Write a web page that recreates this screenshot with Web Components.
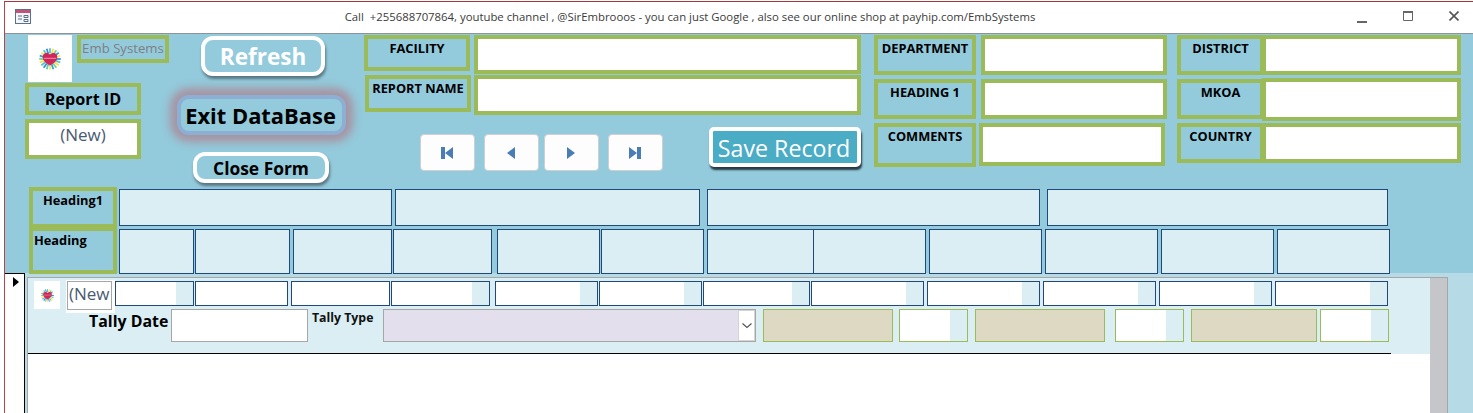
<!DOCTYPE html>
<html lang="en">
<head>
<meta charset="utf-8">
<title>Tally form</title>
<style>
html,body{margin:0;padding:0;background:#fff;overflow:hidden}
body{width:1473px;height:413px;font-family:"Open Sans","Noto Sans",sans-serif}
</style>
</head>
<body>
<access-window>
  <title-bar slot="title">Call &nbsp;+255688707864, youtube channel , @SirEmbrooos - you can just Google , also see our online shop at payhip.com/EmbSystems</title-bar>
  <form-header slot="header"></form-header>
  <form-detail slot="detail"></form-detail>
</access-window>

<script>
const GREEN='#9BBB59', SKY='#93CBDC', PALE='#DBEEF4', NAVY='#1F497D';
const def=(name,cls)=>customElements.define(name,cls);
class Base extends HTMLElement{
  constructor(){super();this.attachShadow({mode:'open'});}
  render(html){this.shadowRoot.innerHTML=html;}
}

def('access-window',class extends Base{
  constructor(){super();this.render(`<style>
    :host{display:block;box-sizing:border-box;width:1469px;height:412px;margin:1px 0 0 4px;border-top:1px solid #A5373B;border-left:1px solid #B8444A;overflow:hidden}
  </style><slot name="title"></slot><slot name="header"></slot><slot name="detail"></slot>`);}
});

def('title-bar',class extends Base{
  constructor(){super();this.render(`<style>
    :host{display:flex;align-items:center;box-sizing:border-box;height:32px;background:#fff;border-bottom:1px solid #8C939C;position:relative;font:11.35px "Open Sans",sans-serif;color:#3b3b3b}
    .ico{margin-left:10px;width:17px;height:16px;flex:none;margin-top:-1px}
    .txt{margin-left:305px;width:706px;text-align:center;white-space:nowrap;margin-top:-3px}
    .min{margin-left:314px}.max{margin-left:36px}.cls{margin-left:36px}
    svg{display:block;flex:none}
  </style>
  <svg class="ico" viewBox="0 0 17 16"><rect x=".5" y=".5" width="15" height="14" fill="#F4F6FA" stroke="#5B6F8E"/><rect x="1" y="1" width="14" height="3" fill="#C4517A"/><path d="M3 7h4M3 10h4M9 6.500h4v2h-4zM9 10.500h4v2h-4z" stroke="#5B6F8E" fill="none"/></svg>
  <span class="txt"><slot></slot></span>
  <svg class="min" width="10" height="10" viewBox="0 0 10 10" style="margin-top:5px"><rect y="6" width="10" height="2" fill="#666"/></svg>
  <svg class="max" width="10" height="10" viewBox="0 0 10 10" style="margin-top:-3px"><path d="M.5.500h9v9h-9z" fill="none" stroke="#666"/><rect width="10" height="2" fill="#666"/></svg>
  <svg class="cls" width="10" height="10" viewBox="0 0 10 10" style="margin-top:-3px"><path d="M.5.500l9 9M9.500.500l-9 9" stroke="#555" stroke-width="1.600"/></svg>`);}
});

def('green-box',class extends Base{
  constructor(){super();this.render(`<style>
    :host{display:block;box-sizing:border-box;flex:none;border:4px solid ${GREEN};background:${SKY};color:#000;font:700 12.8px/16px "Open Sans",sans-serif;text-align:center;white-space:nowrap;overflow:hidden;position:relative;--pt:1px}
    :host([white]){background:#fff}
    :host([big]){font-size:17px;font-weight:400;line-height:22px;color:#4a5a72}
    :host([head]){font-size:16.2px;line-height:20px;padding-top:1px}
    :host([muted]){font-size:13.2px;font-weight:400;color:#808080;line-height:16px}
    :host([left]){text-align:left;padding-left:1px}
    div{padding-top:var(--pt)}
  </style><div><slot></slot></div>`);}
});

def('round-btn',class extends Base{
  constructor(){super();this.render(`<style>
    :host{display:flex;align-items:center;justify-content:center;box-sizing:border-box;flex:none;border:4px solid #fff;border-radius:12px;background:${SKY};box-shadow:1px 3px 3px rgba(40,50,60,.55);font:700 22.5px "Open Sans",sans-serif;white-space:nowrap;color:#fff}
    :host([dark]){color:#000;font-size:17.4px;padding-top:1px}
    :host([exit]){color:#000;font-size:21.9px;border:4px solid #8EAFD4;padding:1px 2px 0 0;box-shadow:0 0 8px 7px rgba(168,141,155,.9)}
    :host([save]){background:#4BACC6;border-radius:5px;font-weight:400;font-size:23.2px;padding:1px 2px 0 0;box-shadow:1px 3px 2px rgba(20,30,40,.85)}
  </style><slot></slot>`);}
});

def('nav-btn',class extends Base{
  constructor(){super();
    const k=this.getAttribute('kind');
    const [w,p]={first:[12,'M0 0h4v12h-4zM12 0v12l-8-6z'],prev:[8,'M8 0v12l-8-6z'],next:[8,'M0 0v12l8-6z'],last:[12,'M8 0h4v12h-4zM0 0v12l8-6z']}[k];
    this.render(`<style>
    :host{display:flex;align-items:center;justify-content:center;box-sizing:border-box;flex:none;width:55px;height:37px;background:#FDFDFD;border:1px solid #CFCFD2;border-radius:4px}
    svg{display:block;margin-right:1px}
  </style><svg width="${w}" height="12" viewBox="0 0 ${w} 12"><path d="${p}" fill="#4A7DB5"/></svg>`);}
});

def('heart-logo',class extends Base{
  constructor(){super();
    const s=+this.getAttribute('size');
    const cols=['#3C8AD0','#4CC4D4','#F4E04A','#7BD08F','#2F9FDC','#F4E660','#5CC6BA'];
    let rays='';
    for(let i=0;i<20;i++){const a=i/20*Math.PI*2,c=Math.cos(a),q=Math.sin(a);
      rays+=`<line x1="${(50+c*25).toFixed(1)}" y1="${(50+q*25).toFixed(1)}" x2="${(50+c*49).toFixed(1)}" y2="${(50+q*49).toFixed(1)}" stroke="${cols[i%7]}" stroke-width="8"/>`;}
    this.render(`<style>
    :host{display:flex;align-items:center;justify-content:center;flex:none;background:#fff}
    svg{display:block}
  </style><svg width="${s}" height="${s}" viewBox="0 0 100 100">${rays}<path d="M50 80C36 72 17 60 17 40c0-10 8-17 17-17 7 0 12 3 16 7 4-4 9-7 16-7 9 0 17 7 17 17 0 20-19 32-33 40z" fill="#D0245A"/><path d="M22 47h56" stroke="#EE8AA0" stroke-width="5"/></svg>`);}
});

/* A row of table-like cells described as x-ranges: each gap is a flex margin */
def('cell-row',class extends Base{
  constructor(){super();
    const start=+this.getAttribute('start');
    const h=this.getAttribute('h');
    const line=this.getAttribute('line')||NAVY;
    let x=start,html='';
    for(const c of this.getAttribute('cells').split(',')){
      const [rng,fill]=c.split(':');
      const [a,b]=rng.split('-').map(Number);
      const f=fill?(+fill-a-1)+'px':'0';
      const bg=fill==='w'?'#fff':fill?`linear-gradient(90deg,#fff ${f},${PALE} ${f})`:PALE;
      html+=`<div style="margin-left:${a-x}px;width:${b-a}px;background:${bg}"></div>`;
      x=b;
    }
    this.render(`<style>
    :host{display:flex;flex:none}
    div{box-sizing:border-box;flex:none;height:${h}px;border:1px solid ${line}}
    </style>${html}`);}
});

def('form-header',class extends Base{
  constructor(){super();this.render(`<style>
    :host{display:block;height:239px;background:${SKY}}
    .top{display:flex;height:153px}
    .col{display:flex;flex-direction:column;flex:none}
    .row{display:flex;align-items:flex-start;flex:none}
    .a{margin-left:20px;width:144px}
    .b{margin-left:8px;width:169px}
    .c{margin-left:18px;width:497px}
    .d{margin-left:13px;width:293px}
    .e{margin-left:10px;width:284px}
    .grid{display:flex;height:86px}
    .labels{margin-left:24px;width:88px;display:flex;flex-direction:column}
    .cells{margin-left:2px;display:flex;flex-direction:column;padding-top:2px;gap:3px}
  </style>
  <div class="top">
    <div class="col a">
      <div class="row" style="height:47px;margin-top:1px">
        <heart-logo size="22" style="margin-left:3px;width:44px;height:47px"></heart-logo>
        <green-box muted style="margin-left:5px;width:92px;height:28px">Emb Systems</green-box>
      </div>
      <green-box head style="margin-top:1px;width:116px;height:32px">Report ID</green-box>
      <green-box white big style="margin-top:4px;width:116px;height:40px">(New)</green-box>
    </div>
    <div class="col b">
      <round-btn style="margin:2px 0 0 24px;width:124px;height:40px">Refresh</round-btn>
      <round-btn exit style="margin-top:19px;width:169px;height:40px">Exit DataBase</round-btn>
      <round-btn dark style="margin:17px 0 0 16px;width:136px;height:31px">Close Form</round-btn>
    </div>
    <div class="col c">
      <div class="row" style="margin-top:1px;height:40px">
        <green-box style="width:106px;height:36px">FACILITY</green-box>
        <green-box white style="margin-left:4px;width:387px;height:39px"></green-box>
      </div>
      <div class="row" style="height:40px">
        <green-box style="margin-left:1px;width:106px;height:37px">REPORT NAME</green-box>
        <green-box white style="margin-left:3px;width:387px;height:40px"></green-box>
      </div>
      <div class="row" style="margin-top:12px">
        <nav-btn kind="first" style="margin:7px 0 0 56px"></nav-btn>
        <nav-btn kind="prev" style="margin:7px 0 0 9px"></nav-btn>
        <nav-btn kind="next" style="margin:7px 0 0 5px"></nav-btn>
        <nav-btn kind="last" style="margin:7px 0 0 9px"></nav-btn>
        <round-btn save style="margin-left:46px;width:152px;height:40px">Save Record</round-btn>
      </div>
    </div>
    <div class="col d">
      <div class="row" style="margin-top:1px;height:44px">
        <green-box style="width:102px;height:40px">DEPARTMENT</green-box>
        <green-box white style="margin-left:5px;width:186px;height:40px"></green-box>
      </div>
      <div class="row" style="height:44px">
        <green-box style="width:102px;height:40px">HEADING 1</green-box>
        <green-box white style="margin-left:5px;width:186px;height:40px"></green-box>
      </div>
      <div class="row">
        <green-box style="width:102px;height:44px">COMMENTS</green-box>
        <green-box white style="margin-left:3px;width:186px;height:43px"></green-box>
      </div>
    </div>
    <div class="col e">
      <div class="row" style="margin-top:1px;height:44px">
        <green-box style="width:87px;height:40px">DISTRICT</green-box>
        <green-box white style="margin-left:-2px;width:199px;height:40px"></green-box>
      </div>
      <div class="row" style="height:44px">
        <green-box style="width:87px;height:40px">MKOA</green-box>
        <green-box white style="margin:-1px 0 0 -2px;width:199px;height:43px"></green-box>
      </div>
      <div class="row">
        <green-box style="width:87px;height:40px">COUNTRY</green-box>
        <green-box white style="margin-left:-2px;width:199px;height:40px"></green-box>
      </div>
    </div>
  </div>
  <div class="grid">
    <div class="labels">
      <green-box style="height:41px">Heading1</green-box>
      <green-box left style="height:47px;margin-top:-1px">Heading</green-box>
    </div>
    <div class="cells">
      <cell-row start="119" h="37" cells="119-392,395-700,707-1040,1047-1388"></cell-row>
      <cell-row start="119" h="45" cells="119-194,195-290,293-392,393-492,497-600,601-704,707-814,813-926,929-1042,1045-1158,1161-1274,1277-1390"></cell-row>
    </div>
  </div>`);}
});

def('form-detail',class extends Base{
  constructor(){super();this.render(`<style>
    :host{display:flex;height:140px;background:#B6DBE7;font-family:"Open Sans",sans-serif}
    .sel{box-sizing:border-box;flex:none;width:20px;background:#fff;border-top:1px solid #000;border-right:1px solid #000;padding:3px 0 0 8px}
    .sel svg{display:block}
    .panel{box-sizing:border-box;flex:none;display:flex;margin:4px 0 0 2px;width:1421px;border:1px solid #A6A6A6;border-width:1px 1px 0 1px;background:#fff}
    .body{flex:none;width:1402px}
    .sec{height:76px;background:${PALE};display:flex;flex-direction:column}
    .sb{flex:1;background:#C4C6CA}
    .r1{display:flex;align-items:flex-start;height:28px;margin-top:3px}
    .new{box-sizing:border-box;flex:none;margin:-1px 0 0 6px;width:49px;height:33px;background:#fff;padding:1px 3px 3px 1px}
    .new div{box-sizing:border-box;height:29px;border:1px solid #A6A6A6;font-size:17px;line-height:24px;padding-left:1px;color:#4a5a72;overflow:hidden;white-space:nowrap}
    .r2{display:flex;align-items:flex-start;height:33px}
    .td{flex:none;margin-left:61px;width:79px;font-size:15.9px;font-weight:700;line-height:24px;white-space:nowrap}
    .tt{flex:none;margin-left:4px;width:62px;font-size:12.3px;font-weight:700;line-height:18px;white-space:nowrap;color:#111}
    .bx{box-sizing:border-box;flex:none;height:33px;border:1px solid ${GREEN}}
    .gray{border-color:#A6A6A6;background:#fff}
    .combo{position:relative;background:#E4DFEC;margin-left:9px;width:373px}
    .dd{position:absolute;right:0;top:0;width:17px;height:31px;box-sizing:border-box;background:#fff;border:1px solid #D5D5D5;display:flex;align-items:center;justify-content:center}
    .ol{background:#DDD9C3}
    .hf{background:linear-gradient(90deg,#fff 50px,${PALE} 50px)}
    .line{margin-top:11px;width:1363px;height:1px;background:#000}
  </style>
  <div class="sel"><svg width="6" height="10" viewBox="0 0 6 10"><path d="M0 0l6 5-6 5z" fill="#000"/></svg></div>
  <div class="panel">
    <div class="body">
      <div class="sec">
        <div class="r1">
          <heart-logo size="13" style="margin-left:6px;width:26px;height:28px"></heart-logo>
          <div class="new"><div>(New</div></div>
          <cell-row start="115" h="25" cells="115-194:176,195-288:w,291-390:w,391-490:472,495-598:580,599-702:684,703-810:792,811-924:906,927-1040:1022,1043-1156:1138,1159-1272:1254,1275-1388:1370"></cell-row>
        </div>
        <div class="r2">
          <span class="td">Tally Date</span>
          <div class="bx gray" style="margin-left:3px;width:137px"></div>
          <span class="tt">Tally Type</span>
          <div class="bx gray combo"><div class="dd"><svg width="10" height="6" viewBox="0 0 10 6"><path d="M.5.500l4.500 4 4.500-4" fill="none" stroke="#555" stroke-width="1.200"/></svg></div></div>
          <div class="bx ol" style="margin-left:7px;width:130px"></div>
          <div class="bx hf" style="margin-left:6px;width:69px"></div>
          <div class="bx ol" style="margin-left:7px;width:130px"></div>
          <div class="bx hf" style="margin-left:10px;width:69px"></div>
          <div class="bx ol" style="margin-left:7px;width:126px"></div>
          <div class="bx hf" style="margin-left:3px;width:69px"></div>
        </div>
        <div class="line"></div>
      </div>
    </div>
    <div class="sb"></div>
  </div>`);}
});
</script>
</body>
</html>
